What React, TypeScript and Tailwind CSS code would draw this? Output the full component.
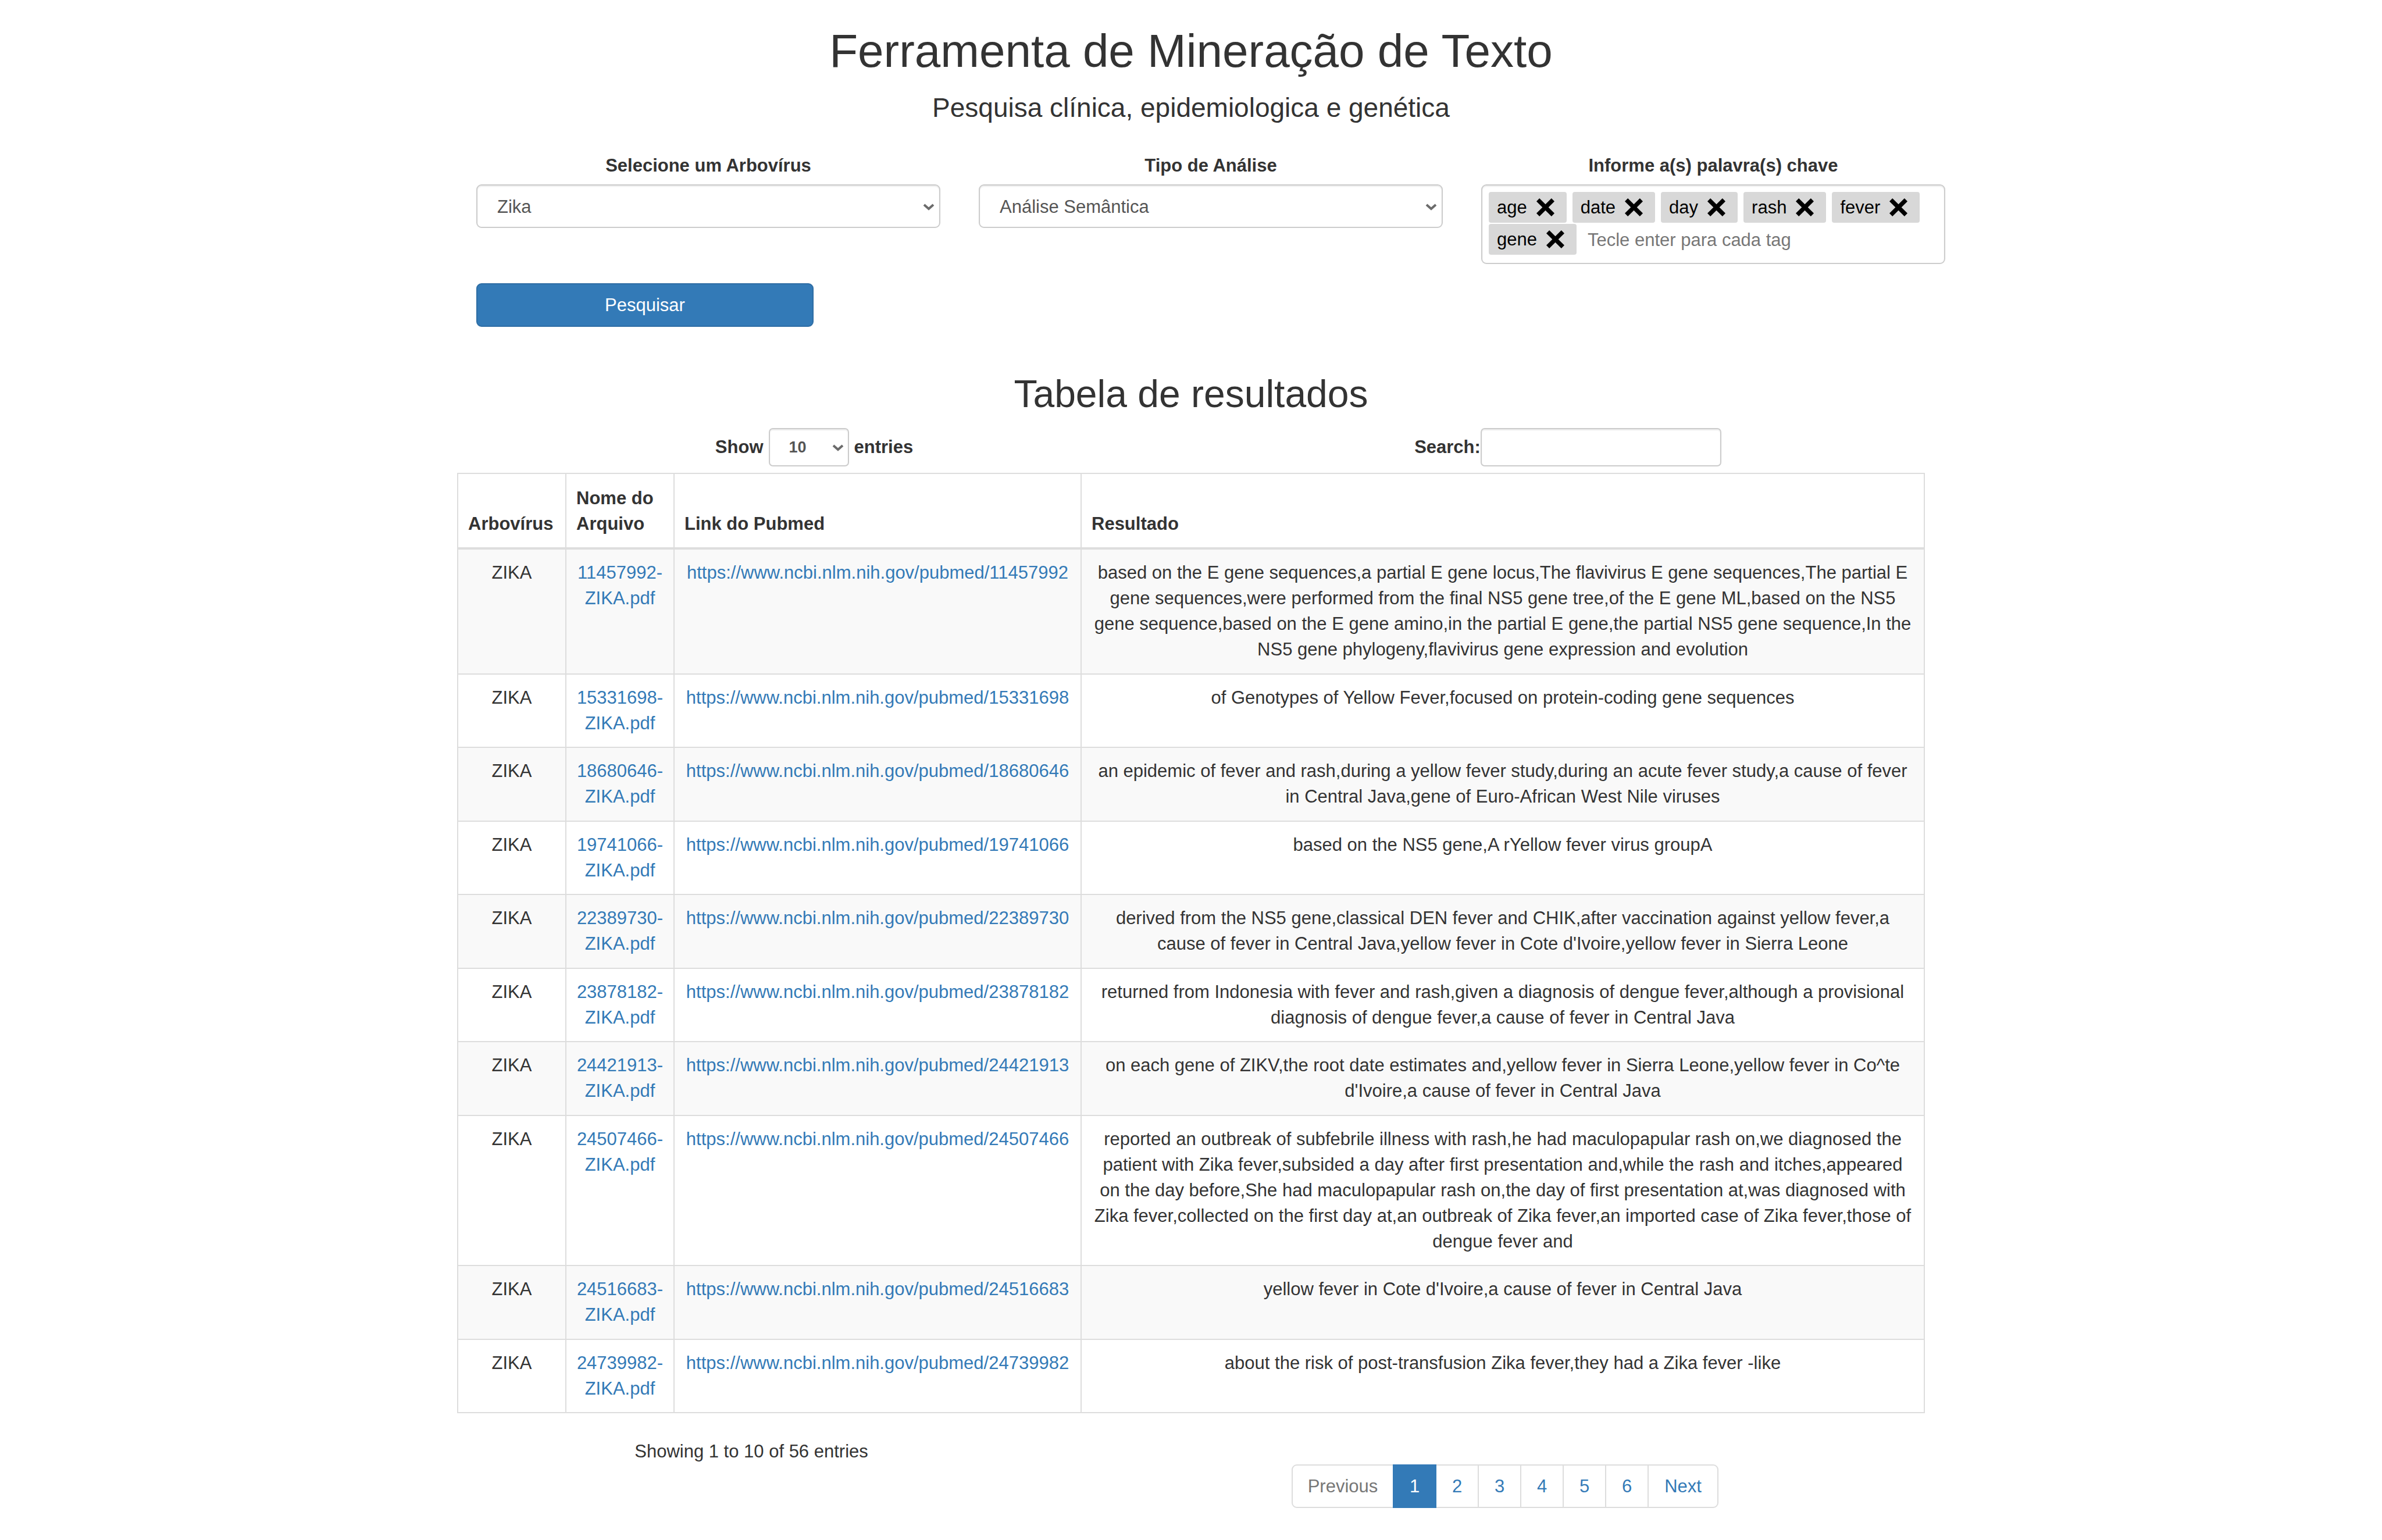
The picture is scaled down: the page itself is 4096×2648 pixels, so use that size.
import { useState } from "react";

const rows: [string, string][] = [
  ["11457992", "based on the E gene sequences,a partial E gene locus,The flavivirus E gene sequences,The partial E gene sequences,were performed from the final NS5 gene tree,of the E gene ML,based on the NS5 gene sequence,based on the E gene amino,in the partial E gene,the partial NS5 gene sequence,In the NS5 gene phylogeny,flavivirus gene expression and evolution"],
  ["15331698", "of Genotypes of Yellow Fever,focused on protein-coding gene sequences"],
  ["18680646", "an epidemic of fever and rash,during a yellow fever study,during an acute fever study,a cause of fever in Central Java,gene of Euro-African West Nile viruses"],
  ["19741066", "based on the NS5 gene,A rYellow fever virus groupA"],
  ["22389730", "derived from the NS5 gene,classical DEN fever and CHIK,after vaccination against yellow fever,a cause of fever in Central Java,yellow fever in Cote d'Ivoire,yellow fever in Sierra Leone"],
  ["23878182", "returned from Indonesia with fever and rash,given a diagnosis of dengue fever,although a provisional diagnosis of dengue fever,a cause of fever in Central Java"],
  ["24421913", "on each gene of ZIKV,the root date estimates and,yellow fever in Sierra Leone,yellow fever in Co^te d'Ivoire,a cause of fever in Central Java"],
  ["24507466", "reported an outbreak of subfebrile illness with rash,he had maculopapular rash on,we diagnosed the patient with Zika fever,subsided a day after first presentation and,while the rash and itches,appeared on the day before,She had maculopapular rash on,the day of first presentation at,was diagnosed with Zika fever,collected on the first day at,an outbreak of Zika fever,an imported case of Zika fever,those of dengue fever and"],
  ["24516683", "yellow fever in Cote d'Ivoire,a cause of fever in Central Java"],
  ["24739982", "about the risk of post-transfusion Zika fever,they had a Zika fever -like"],
];

const field = "border-2 border-[#ccc] bg-white text-[#555] shadow-[inset_0_2px_2px_rgba(0,0,0,0.075)]";
const cell = "border-2 border-[#ddd] px-[17px] pt-[18px]";

function Chevron({ className }: { className: string }) {
  return (
    <svg viewBox="0 0 20 12" className={"pointer-events-none absolute h-3 w-5 " + className} fill="none" stroke="#6b6b6b" strokeWidth="4" aria-hidden="true">
      <path d="M2 2l8 7 8-7" />
    </svg>
  );
}

function Tag({ text, onRemove }: { text: string; onRemove: () => void }) {
  return (
    <span className="flex h-[53px] items-center rounded-[4px] bg-[#d8d8d8] pr-[21px] pl-[14px] text-black">
      {text}
      <button type="button" aria-label={"Remover " + text} onClick={onRemove} className="ml-4 flex cursor-pointer">
        <svg viewBox="1 1 30 30" className="size-[31px]" aria-hidden="true">
          <path d="M6 1l10 10L26 1l5 5-10 10 10 10-5 5-10-10L6 31l-5-5 10-10L1 6z" />
        </svg>
      </button>
    </span>
  );
}

export default function App() {
  const [tags, setTags] = useState(["age", "date", "day", "rash", "fever", "gene"]);
  const [draft, setDraft] = useState("");
  const page = "relative -ml-0.5 flex h-[75px] items-center justify-center border-2 focus:z-10";
  return (
    <main className="min-h-screen bg-white font-['Liberation_Sans',Arial,sans-serif] text-[31px] leading-[44px] text-[#333]">
      <div className="mx-auto max-w-[2524px]">
        <header className="pt-[44px] text-center">
          <h1 className="text-[80px] leading-[88px]">Ferramenta de Mineração de Texto</h1>
          <p className="mt-[27px] text-[46px] leading-[52px]">Pesquisa clínica, epidemiologica e genética</p>
        </header>

        <form className="-mr-[68px] mt-[52px]" onSubmit={(e) => e.preventDefault()}>
          <div className="grid grid-cols-3 items-start">
            <div className="px-[33px]">
              <label htmlFor="virus" className="mb-[10px] block text-center font-bold">Selecione um Arbovírus</label>
              <div className="relative">
                <select id="virus" className={"h-[75px] w-full appearance-none rounded-[9px] px-[34px] pt-0.5 " + field}>
                  <option>Zika</option>
                </select>
                <Chevron className="top-[33px] right-[10px]" />
              </div>
            </div>
            <div className="px-[33px]">
              <label htmlFor="analysis" className="mb-[10px] block text-center font-bold">Tipo de Análise</label>
              <div className="relative">
                <select id="analysis" className={"h-[75px] w-full appearance-none rounded-[9px] px-[34px] pt-0.5 " + field}>
                  <option>Análise Semântica</option>
                </select>
                <Chevron className="top-[33px] right-[10px]" />
              </div>
            </div>
            <div className="px-[33px]">
              <label htmlFor="keywords" className="mb-[10px] block text-center font-bold">Informe a(s) palavra(s) chave</label>
              <div className={"flex min-h-[75px] flex-wrap gap-x-[10px] gap-y-0.5 rounded-[9px] px-[11px] pt-[11px] pb-[14px] " + field}>
                {tags.map((t) => (
                  <Tag key={t} text={t} onRemove={() => setTags(tags.filter((x) => x !== t))} />
                ))}
                <input
                  id="keywords"
                  value={draft}
                  placeholder="Tecle enter para cada tag"
                  onChange={(e) => setDraft(e.target.value)}
                  onKeyDown={(e) => {
                    if (e.key === "Enter" && draft.trim()) {
                      e.preventDefault();
                      setTags([...tags, draft.trim()]);
                      setDraft("");
                    }
                  }}
                  className="h-[53px] w-[400px] grow pt-0.5 pl-[9px] outline-none placeholder:text-[#777]"
                />
              </div>
            </div>
          </div>
          <button type="submit" className="mt-[33px] ml-[33px] h-[75px] w-[580px] cursor-pointer rounded-[9px] border-2 border-[#2e6da4] bg-[#337ab7] text-white">
            Pesquisar
          </button>
        </form>

        <section>
          <h2 className="mt-[79px] text-center text-[66px] leading-[72px]">Tabela de resultados</h2>
          <div className="-mx-[34px] mt-[23px] grid grid-cols-2">
            <div className="flex justify-center">
              <label className="flex items-center gap-[9px] font-bold">
                Show
                <span className="relative">
                  <select className={"block h-[66px] w-[138px] appearance-none rounded-[7px] pl-[33px] text-[27px] font-bold " + field}>
                    <option>10</option>
                    <option>25</option>
                    <option>50</option>
                  </select>
                  <Chevron className="top-7 right-[9px]" />
                </span>
                entries
              </label>
            </div>
            <div className="flex justify-center">
              <label className="flex items-center font-bold">
                Search:
                <input type="search" className={"h-[66px] w-[414px] rounded-[7px] px-[22px] text-[27px] font-normal " + field} />
              </label>
            </div>
          </div>

          <table className="mt-[11px] w-full table-fixed border-collapse border-2 border-[#ddd]">
            <colgroup>
              <col className="w-[186px]" />
              <col className="w-[186px]" />
              <col className="w-[700px]" />
              <col />
            </colgroup>
            <thead>
              <tr>
                {["Arbovírus", "Nome do Arquivo", "Link do Pubmed", "Resultado"].map((h) => (
                  <th key={h} scope="col" className="border-2 border-b-4 border-[#ddd] px-[17px] pt-5 pb-[18px] text-left align-bottom font-bold">{h}</th>
                ))}
              </tr>
            </thead>
            <tbody>
              {rows.map(([id, result]) => (
                <tr key={id} className="text-center align-top odd:bg-[#f9f9f9] odd:*:pb-[19px] even:*:pb-[18px]">
                  <td className={cell}>ZIKA</td>
                  <td className={cell}>
                    <a href={"#" + id} className="inline-block text-[#337ab7]">{`${id}-ZIKA.pdf`}</a>
                  </td>
                  <td className={cell}>
                    <a href={"https://www.ncbi.nlm.nih.gov/pubmed/" + id} className="text-[#337ab7]">{`https://www.ncbi.nlm.nih.gov/pubmed/${id}`}</a>
                  </td>
                  <td className={cell}>{result}</td>
                </tr>
              ))}
            </tbody>
          </table>

          <div className="-mx-[34px] mt-[44px] grid grid-cols-12">
            <p className="col-span-5 text-center">Showing 1 to 10 of 56 entries</p>
            <nav aria-label="Paginação" className="col-span-7 mt-[44px] flex justify-center pl-0.5 text-[#337ab7]">
              <button type="button" disabled className={page + " w-[176px] rounded-l-[9px] border-[#ddd] text-[#777]"}>Previous</button>
              <a href="#1" aria-current="page" className={page + " z-1 w-[75px] border-[#337ab7] bg-[#337ab7] text-white"}>1</a>
              {["2", "3", "4", "5", "6"].map((n) => (
                <a key={n} href={"#" + n} className={page + " w-[75px] border-[#ddd]"}>{n}</a>
              ))}
              <a href="#next" className={page + " w-[122px] rounded-r-[9px] border-[#ddd]"}>Next</a>
            </nav>
          </div>
        </section>
      </div>
    </main>
  );
}
